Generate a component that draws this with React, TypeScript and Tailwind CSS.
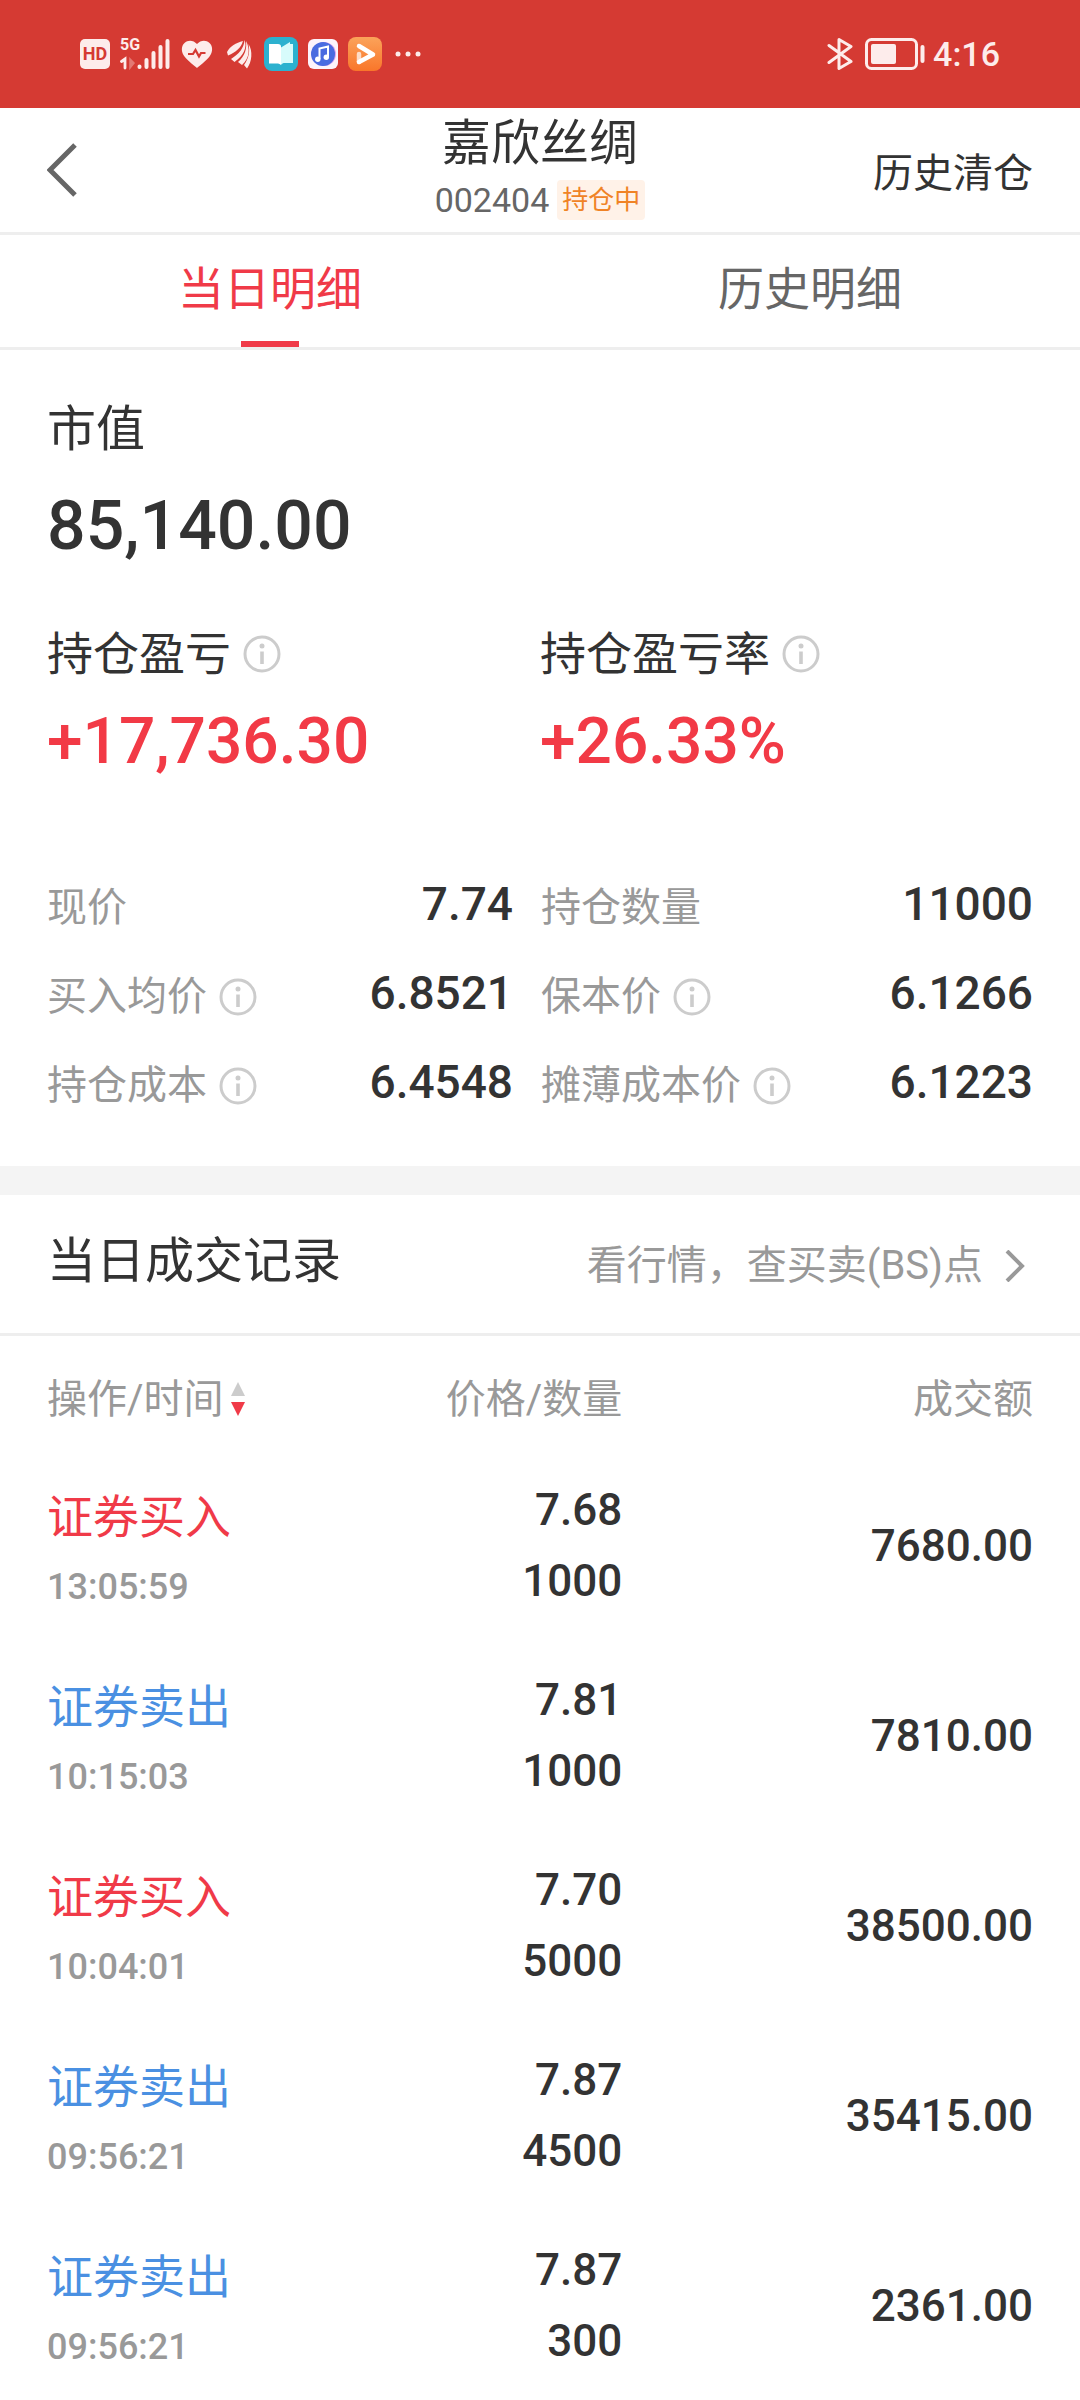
import React, { useState } from "react";

type Metric = { label: string; value: string; info?: boolean };

type Trade = {
  side: "buy" | "sell";
  time: string;
  price: string;
  quantity: string;
  amount: string;
};

const metrics: Metric[] = [
  { label: "现价", value: "7.74" },
  { label: "持仓数量", value: "11000" },
  { label: "买入均价", value: "6.8521", info: true },
  { label: "保本价", value: "6.1266", info: true },
  { label: "持仓成本", value: "6.4548", info: true },
  { label: "摊薄成本价", value: "6.1223", info: true },
];

const trades: Trade[] = [
  { side: "buy", time: "13:05:59", price: "7.68", quantity: "1000", amount: "7680.00" },
  { side: "sell", time: "10:15:03", price: "7.81", quantity: "1000", amount: "7810.00" },
  { side: "buy", time: "10:04:01", price: "7.70", quantity: "5000", amount: "38500.00" },
  { side: "sell", time: "09:56:21", price: "7.87", quantity: "4500", amount: "35415.00" },
  { side: "sell", time: "09:56:21", price: "7.87", quantity: "300", amount: "2361.00" },
];

const tabs = ["当日明细", "历史明细"];

const InfoButton: React.FC<{ label: string }> = ({ label }) => (
  <button aria-label={label} className="shrink-0">
    <svg className="w-[38px] h-[38px]" viewBox="0 0 38 38" fill="none">
      <circle cx="19" cy="19" r="17" stroke="#ccc" strokeWidth="3" />
      <circle cx="19" cy="11" r="2.5" fill="#ccc" />
      <path d="M19 16.5v12.5" stroke="#ccc" strokeWidth="3.6" />
    </svg>
  </button>
);

const StatusBar: React.FC = () => (
  <div className="h-[108px] bg-[#d53a33] text-[#fdeceb] flex items-center justify-between px-20">
    <div className="flex items-center">
      {/* HD voice */}
      <span className="w-[30px] h-[30px] rounded-[5px] bg-[#fdeceb] text-[#d53a33] text-[18px] leading-none font-bold flex items-center justify-center">
        HD
      </span>
      {/* Signal */}
      <div className="ml-[10px] w-[50px] h-8 relative">
        <span className="absolute left-0 -top-px text-[16px] leading-4 font-bold">5G</span>
        <svg className="w-full h-full" viewBox="0 0 50 32" fill="none" stroke="currentColor" strokeLinecap="round">
          <path d="M1.5 23.5L5 21v9" strokeWidth="2.8" />
          <path d="M10 21v9l4-5z" strokeWidth="1.6" fill="currentColor" opacity="0.35" />
          <path d="M19.5 28.5v.5M26.5 22v7M33.5 15v14M40.5 9v20M47.5 3v26" strokeWidth="4" />
        </svg>
      </div>
      {/* Health */}
      <svg className="ml-[11px] w-8 h-[30px]" viewBox="0 0 32 30">
        <path
          d="M16 29C14.5 27.5 7 22 3.5 17.500 0 13 0 7 3.500 4 7 .5 12.5 1 16 5c3.500-4 9-4.500 12.500-1 3.500 3 3.500 9 0 13.500C25 22 17.500 27.500 16 29z"
          fill="#fdeceb"
        />
        <path d="M7 15h5l2.500-4 3.500 6.500 2-3.500h4.500" fill="none" stroke="#d53a33" strokeWidth="2.2" />
      </svg>
      {/* Wing */}
      <svg className="ml-[14px] w-[26px] h-8" viewBox="0 0 26 32" fill="#fdeceb">
        <path d="M0 14C3 8 9 5 16 3 14 10 9 14 1 17.500z" />
        <path d="M4 21C12 16 17 10 17.500 2c3 7-1 16-10 22z" />
        <path d="M11 24c7-6 9-13 8-21 4 7 4 17-4 24z" />
        <path d="M17 27c5-7 6-14 4.500-21C26 13 25 24 20 30.500z" />
      </svg>
      {/* Reader */}
      <svg className="ml-[11px] w-[34px] h-[34px]" viewBox="0 0 34 34">
        <rect width="34" height="34" rx="8" fill="#2cb1cf" />
        <path d="M5 7h9c2 0 3 1 3 2.500V28c-1-1-2-1.500-3-1.500H5z" fill="#fff" />
        <path d="M29 7v19h-8c-2 0-3 .5-4 2V10.500L26 5v2z" fill="#d7fbfb" />
      </svg>
      {/* Music */}
      <svg className="ml-[10px] w-[30px] h-[30px]" viewBox="0 0 30 30">
        <rect width="30" height="30" rx="6" fill="#fdf3fb" />
        <circle cx="16" cy="15" r="12" fill="#d9a0f0" />
        <circle cx="15" cy="15" r="12" fill="#4a6be0" />
        <path d="M11.500 20V9.500l8.500-2V18" fill="none" stroke="#fff" strokeWidth="2" />
        <circle cx="9.800" cy="20.300" r="2.700" fill="#fff" />
        <circle cx="18.300" cy="18.300" r="2.700" fill="#fff" />
      </svg>
      {/* Video */}
      <svg className="ml-[10px] w-[34px] h-[34px]" viewBox="0 0 34 34">
        <defs>
          <linearGradient id="video" x1="0" y1="0" x2="0" y2="1">
            <stop offset="0" stopColor="#fba35a" />
            <stop offset="1" stopColor="#f9762a" />
          </linearGradient>
        </defs>
        <rect width="34" height="34" rx="8" fill="url(#video)" />
        <path d="M11 25v-8" stroke="#fff" strokeWidth="4.500" strokeLinecap="round" opacity="0.7" />
        <path d="M11 9l14 8.500L11 25" fill="none" stroke="#fff" strokeWidth="4.500" strokeLinejoin="round" strokeLinecap="round" />
      </svg>
      <svg className="ml-[13px] w-[26px] h-[6px]" viewBox="0 0 26 6" fill="#fdeceb">
        <circle cx="3" cy="3" r="2.500" />
        <circle cx="13" cy="3" r="2.500" />
        <circle cx="23" cy="3" r="2.500" />
      </svg>
    </div>
    <div className="flex items-center">
      <svg className="w-[26px] h-8" viewBox="0 0 26 32" fill="none" stroke="currentColor" strokeWidth="3" strokeLinejoin="round" strokeLinecap="round">
        <path d="M2 7.500l22 16-12 7V1.500l12 7-22 16" />
      </svg>
      <svg className="ml-3 w-[60px] h-8" viewBox="0 0 60 32" fill="none">
        <rect x="1.500" y="1.500" width="50" height="29" rx="5" stroke="currentColor" strokeWidth="3" />
        <rect x="6" y="6" width="25" height="20" rx="2" fill="currentColor" />
        <path d="M57.500 9v14" stroke="currentColor" strokeWidth="4" strokeLinecap="round" />
      </svg>
      <span className="ml-2 text-[34px] leading-none font-medium">4:16</span>
    </div>
  </div>
);

const Header: React.FC = () => (
  <header className="h-[127px] border-b-[3px] border-[#eee] grid grid-cols-3 items-center px-[47px]">
    <button aria-label="返回" className="justify-self-start">
      <svg className="w-[30px] h-[54px]" viewBox="0 0 30 54" fill="none" stroke="#666" strokeWidth="5">
        <path d="M28 2L3 27l25 25" />
      </svg>
    </button>
    <div className="flex flex-col items-center gap-1 pb-2">
      <h1 className="text-[49px] leading-[64px] text-[#333] whitespace-nowrap">嘉欣丝绸</h1>
      <div className="flex items-center gap-2">
        <span className="text-[34px] leading-10 text-[#666]">002404</span>
        <span className="px-[5px] rounded-[4px] bg-[#fff2e8] text-[26px] leading-10 text-[#f08326] whitespace-nowrap">
          持仓中
        </span>
      </div>
    </div>
    <a href="#history" className="justify-self-end pt-2 text-[40px] leading-[56px] text-[#333] whitespace-nowrap">
      历史清仓
    </a>
  </header>
);

const Tabs: React.FC = () => {
  const [active, setActive] = useState(0);

  return (
    <nav className="grid grid-cols-2 h-[115px] border-b-[3px] border-[#eee]">
      {tabs.map((tab, i) => (
        <button key={tab} onClick={() => setActive(i)} className="flex flex-col items-center justify-between">
          <span className={`pt-[22px] text-[46px] leading-[64px] ${active === i ? "text-[#f03a48]" : "text-[#666]"}`}>
            {tab}
          </span>
          <span className={`w-[58px] h-[6px] ${active === i ? "bg-[#f03a48]" : ""}`} />
        </button>
      ))}
    </nav>
  );
};

const Summary: React.FC = () => (
  <section className="px-[47px] pt-12 pb-9 text-[#333]">
    <h2 className="text-[49px] leading-[64px]">市值</h2>
    <p className="mt-6 text-[68px] leading-[80px] font-medium">85,140.00</p>
    <div className="mt-14 grid grid-cols-2">
      <div>
        <div className="flex items-center gap-3 text-[46px] leading-[64px]">
          持仓盈亏
          <InfoButton label="持仓盈亏" />
        </div>
        <p className="mt-4 text-[64px] leading-[80px] font-medium text-[#f23a46]">+17,736.30</p>
      </div>
      <div>
        <div className="flex items-center gap-3 text-[46px] leading-[64px]">
          持仓盈亏率
          <InfoButton label="持仓盈亏率" />
        </div>
        <p className="mt-4 text-[64px] leading-[80px] font-medium text-[#f23a46]">+26.33%</p>
      </div>
    </div>
    <dl className="mt-[81px] grid grid-cols-[466fr_492fr] gap-x-7">
      {metrics.map((m) => (
        <div key={m.label} className="h-[89px] flex items-center justify-between">
          <dt className="flex items-center gap-3 text-[40px] leading-[56px] text-[#999] whitespace-nowrap">
            {m.label}
            {m.info && <InfoButton label={m.label} />}
          </dt>
          <dd className="pb-2 text-[46px] leading-[56px] font-medium">{m.value}</dd>
        </div>
      ))}
    </dl>
  </section>
);

const TradeTable: React.FC = () => (
  <section>
    <div className="h-[141px] border-b-[3px] border-[#eee] px-[47px] flex items-center justify-between">
      <h2 className="pb-1 text-[49px] leading-[64px] text-[#333]">当日成交记录</h2>
      <a href="#quotes" className="pt-1 flex items-center text-[40px] leading-[56px] text-[#999]">
        看行情，查买卖(BS)点
        <svg className="ml-[22px] mr-2 w-5 h-8" viewBox="0 0 20 32" fill="none" stroke="#999" strokeWidth="4">
          <path d="M2 1l15 15L2 31" />
        </svg>
      </a>
    </div>
    <div className="px-[47px]">
      <table className="w-full table-fixed text-right text-[#333]">
        <thead>
          <tr className="h-[115px] text-[40px] leading-[56px] text-[#999]">
            <th className="w-7/24 p-0 pt-3 font-normal text-left whitespace-nowrap">
              <button className="flex items-center gap-[6px]">
                操作/时间
                <svg className="w-4 h-9" viewBox="0 0 16 36">
                  <path d="M8 0l7 14H1z" fill="#ccc" />
                  <path d="M8 34l7-14H1z" fill="#f03a48" />
                </svg>
              </button>
            </th>
            <th className="w-7/24 p-0 pt-3 font-normal">价格/数量</th>
            <th className="p-0 pt-3 font-normal">成交额</th>
          </tr>
        </thead>
        <tbody>
          {trades.map((t, i) => (
            <tr key={i} className="h-[190px]">
              <td className="p-0 pt-3 text-left">
                <div className={`text-[46px] leading-[70px] ${t.side === "buy" ? "text-[#f03a48]" : "text-[#4a90e2]"}`}>
                  {t.side === "buy" ? "证券买入" : "证券卖出"}
                </div>
                <div className="text-[36px] leading-[70px] font-medium text-[#999]">{t.time}</div>
              </td>
              <td className="p-0 text-[44px] leading-[71px] font-medium">
                <div>{t.price}</div>
                <div>{t.quantity}</div>
              </td>
              <td className="p-0 text-[44px] leading-[71px] font-medium">{t.amount}</td>
            </tr>
          ))}
        </tbody>
      </table>
    </div>
  </section>
);

const App: React.FC = () => {
  return (
    <main className="min-h-screen bg-white font-['Roboto','Noto_Sans_CJK_SC',sans-serif]">
      <StatusBar />
      <Header />
      <Tabs />
      <Summary />
      <div className="h-[29px] bg-[#f4f4f4]" />
      <TradeTable />
    </main>
  );
};

export default App;
